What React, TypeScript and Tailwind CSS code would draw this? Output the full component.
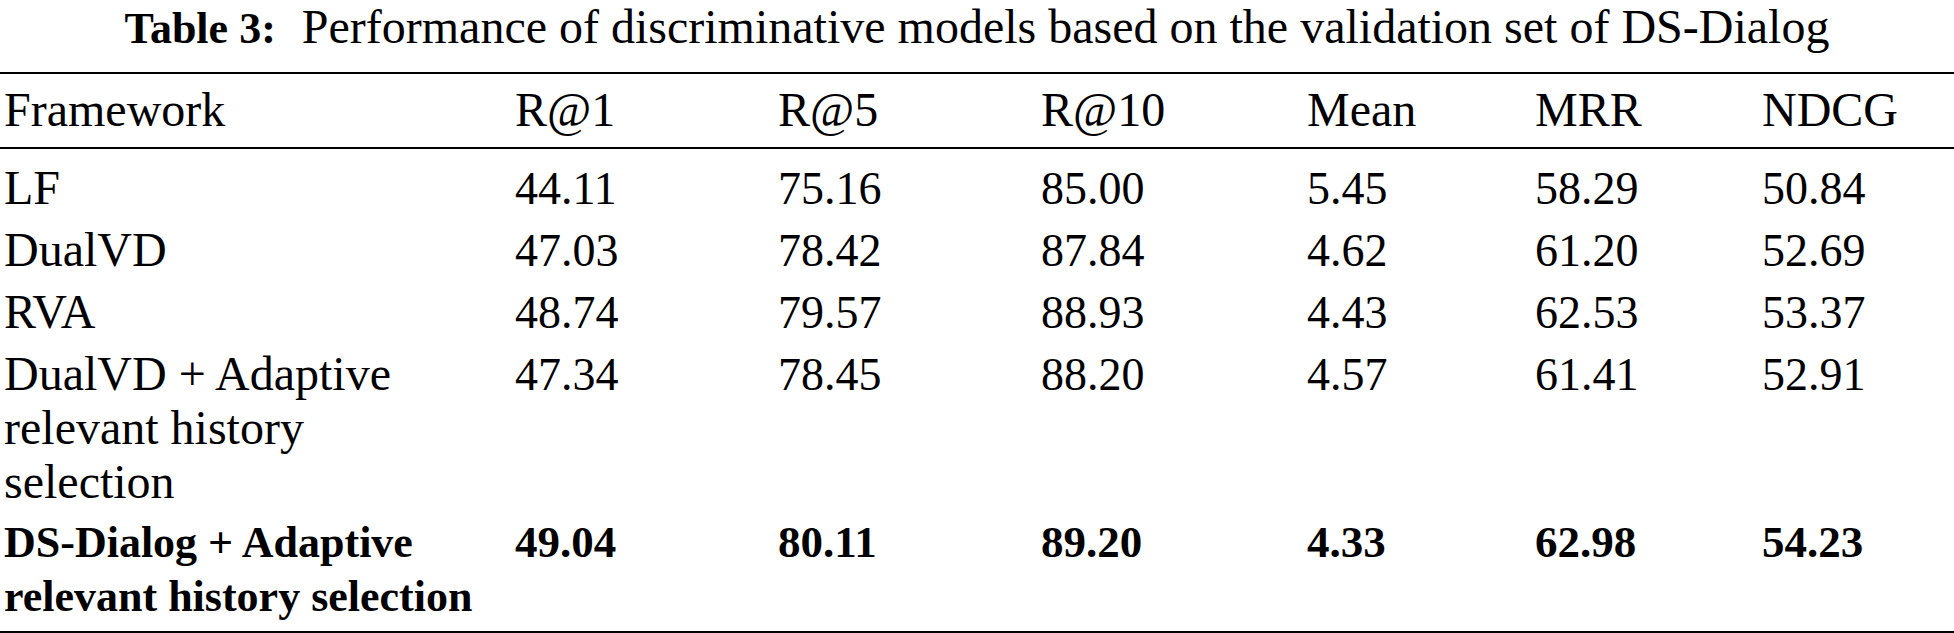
import React from 'react'

const rows = [
  { name: ['LF'], vals: ['44.11', '75.16', '85.00', '5.45', '58.29', '50.84'] },
  { name: ['DualVD'], vals: ['47.03', '78.42', '87.84', '4.62', '61.20', '52.69'] },
  { name: ['RVA'], vals: ['48.74', '79.57', '88.93', '4.43', '62.53', '53.37'] },
  {
    name: ['DualVD + Adaptive', 'relevant history', 'selection'],
    vals: ['47.34', '78.45', '88.20', '4.57', '61.41', '52.91'],
  },
]

const best = {
  name: ['DS-Dialog + Adaptive', 'relevant history selection'],
  vals: ['49.04', '80.11', '89.20', '4.33', '62.98', '54.23'],
}

const headers = ['R@1', 'R@5', 'R@10', 'Mean', 'MRR', 'NDCG']

const gridCols = 'grid grid-cols-[515px_263px_263px_266px_228px_227px_1fr] items-baseline'

export default function App() {
  return (
    <div className="w-[1954px] h-[633px] bg-white text-black font-['Liberation_Serif',serif] overflow-hidden">
      {/* caption */}
      <div className="h-[53px] leading-[53px] text-center whitespace-nowrap">
        <span className="font-bold text-[44px]">Table 3:</span>
        <span className="ml-[26px] text-[48px]">
          Performance of discriminative models based on the validation set of DS-Dialog
        </span>
      </div>

      <div className="mt-[19px] h-[2px] bg-black" />

      {/* header */}
      <div className={`${gridCols} pt-[9px] pb-[10px] leading-[54px]`}>
        <div className="pl-[4px] text-[48px]">Framework</div>
        {headers.map((h) => (
          <div key={h} className="text-[48px]">{h}</div>
        ))}
      </div>

      <div className="h-[2px] bg-black" />

      {/* body */}
      <div className="pt-[8px]">
        {rows.map((r) => (
          <div key={r.name[0]} className={`${gridCols} py-[3.5px] leading-[54px]`}>
            <div className="pl-[4px] text-[48px] whitespace-nowrap">
              {r.name.map((line) => (
                <div key={line}>{line}</div>
              ))}
            </div>
            {r.vals.map((v, i) => (
              <div key={i} className="text-[46px]">{v}</div>
            ))}
          </div>
        ))}
        <div className={`${gridCols} pt-[2.5px] pb-[3.5px] leading-[54px] font-bold`}>
          <div className="pl-[4px] text-[44px] whitespace-nowrap">
            {best.name.map((line) => (
              <div key={line}>{line}</div>
            ))}
          </div>
          {best.vals.map((v, i) => (
            <div key={i} className="text-[45px]">{v}</div>
          ))}
        </div>
      </div>

      <div className="mt-[4px] h-[2px] bg-black" />
    </div>
  )
}
